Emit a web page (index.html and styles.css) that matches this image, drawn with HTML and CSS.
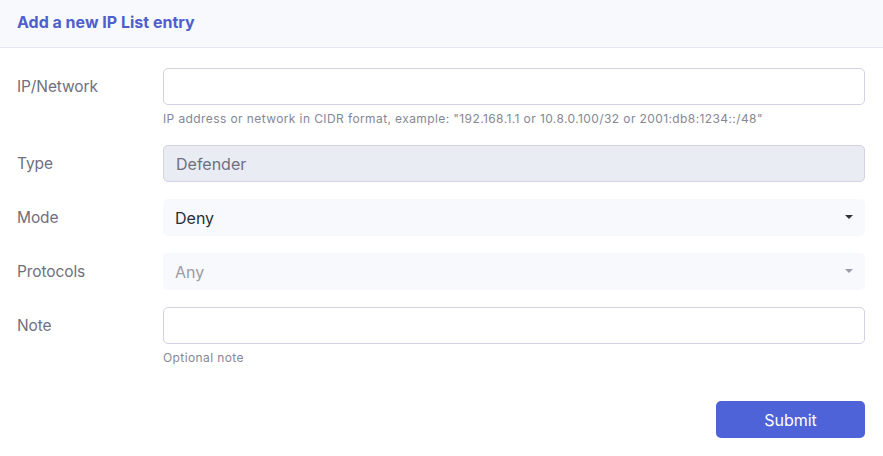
FILE: index.html
```html
<!DOCTYPE html>
<html lang="en">
<head>
<meta charset="utf-8">
<title>Add a new IP List entry</title>
<link rel="stylesheet" href="styles.css">
</head>
<body>
<div class="card">
  <div class="card-header">
    <h6 class="card-title">Add a new IP List entry</h6>
  </div>
  <form class="card-body">
    <div class="row">
      <label class="label" for="ip">IP/Network</label>
      <div class="field">
        <input id="ip" class="control" type="text">
        <div class="help">IP address or network in CIDR format, example: "192.168.1.1 or 10.8.0.100/32 or 2001:db8:1234::/48"</div>
      </div>
    </div>
    <div class="row">
      <label class="label" for="type">Type</label>
      <div class="field">
        <input id="type" class="control disabled" type="text" value="Defender" disabled>
      </div>
    </div>
    <div class="row">
      <label class="label" for="mode">Mode</label>
      <div class="field">
        <div class="select-wrap">
          <select id="mode" class="control select">
            <option>Deny</option>
          </select>
          <span class="caret"></span>
        </div>
      </div>
    </div>
    <div class="row">
      <label class="label" for="proto">Protocols</label>
      <div class="field">
        <div class="select-wrap">
          <select id="proto" class="control select muted" disabled>
            <option>Any</option>
          </select>
          <span class="caret caret-muted"></span>
        </div>
      </div>
    </div>
    <div class="row">
      <label class="label" for="note">Note</label>
      <div class="field">
        <input id="note" class="control" type="text">
        <div class="help">Optional note</div>
      </div>
    </div>
    <div class="actions">
      <button type="button" class="btn">Submit</button>
    </div>
  </form>
</div>
</body>
</html>
```
FILE: styles.css
```css
* { box-sizing: border-box; }
html, body { margin: 0; padding: 0; background: #fff; }
body {
  font-family: Inter, "Noto Sans", "Liberation Sans", sans-serif;
  color: #6e707e;
  width: 883px;
}
.card-header {
  height: 48px;
  background: #f8f9fc;
  border-bottom: 1px solid #e3e6f0;
  display: flex;
  align-items: center;
  padding: 0 17px 4px;
}
.card-title {
  margin: 0;
  font-size: 16px;
  font-weight: 700;
  color: #4e5fcd;
  letter-spacing: 0;
}
.card-body {
  padding: 20px 18px 0 17px;
}
.row {
  display: grid;
  grid-template-columns: 146px 702px;
  align-items: start;
  margin-bottom: 17px;
}
.label {
  font-size: 15.5px;
  letter-spacing: -0.1px;
  line-height: 36px;
  padding-top: 1px;
  height: 37px;
  color: #6e707e;
}
.field { display: flex; flex-direction: column; }
.control {
  height: 37px;
  width: 100%;
  border: 1px solid #d1d3e2;
  border-radius: 5px;
  padding: 0 12px;
  font-family: inherit;
  font-size: 16px;
  color: #3a3b45;
  background: #fff;
  outline: none;
  margin: 0;
}
.control.disabled {
  background: #eaecf4;
  color: #6e707e;
}
.select-wrap { position: relative; height: 37px; }
.select {
  -webkit-appearance: none;
  appearance: none;
  border: none;
  background: #f8f9fc;
  color: #2c2d36;
  display: block;
}
.select.muted { color: #9a9ba6; opacity: 1; }
.caret {
  position: absolute;
  right: 12px;
  top: 16px;
  width: 0;
  height: 0;
  border-left: 4px solid transparent;
  border-right: 4px solid transparent;
  border-top: 4px solid #333;
}
.caret.caret-muted { border-top-color: #9a9ba6; }
.help {
  margin-top: 5px;
  font-size: 12px;
  letter-spacing: 0.4px;
  line-height: 18px;
  height: 18px;
  color: #858796;
}
.actions {
  display: flex;
  justify-content: flex-end;
  padding-top: 17px;
}
.btn {
  width: 149px;
  height: 37px;
  border: none;
  border-radius: 5px;
  background: #4e63d7;
  color: #fff;
  font-family: inherit;
  font-size: 16px;
}
```
